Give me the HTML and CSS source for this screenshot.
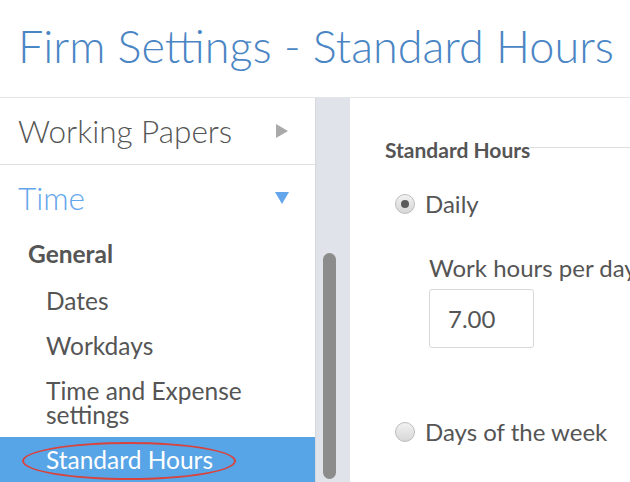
FILE: index.html
```html
<!DOCTYPE html>
<html>
<head>
<meta charset="utf-8">
<link rel="stylesheet" href="styles.css">
</head>
<body>
<header class="header">
  <h1 class="title">Firm Settings - Standard Hours</h1>
</header>
<div class="main">
  <nav class="sidebar">
    <div class="section">
      <span class="section-label">Working Papers</span>
      <span class="tri tri-right"></span>
    </div>
    <div class="section section-open">
      <span class="section-label">Time</span>
      <span class="tri tri-down"></span>
    </div>
    <div class="group">General</div>
    <a class="item">Dates</a>
    <a class="item">Workdays</a>
    <a class="item">Time and Expense settings</a>
    <a class="item item-active"><span class="item-text">Standard Hours</span><span class="ring"></span></a>
  </nav>
  <div class="scrolltrack"><div class="thumb"></div></div>
  <section class="content">
    <div class="legend"><span class="legend-text">Standard Hours</span><span class="legend-line"></span></div>
    <label class="radio-row"><span class="radio radio-on"></span><span>Daily</span></label>
    <div class="field">
      <div class="field-label">Work hours per day</div>
      <div class="input">7.00</div>
    </div>
    <label class="radio-row radio-week"><span class="radio"></span><span>Days of the week</span></label>
  </section>
</div>
</body>
</html>
```

FILE: styles.css
```css
* { box-sizing: border-box; }
html, body { margin: 0; padding: 0; }
body {
  width: 630px;
  height: 482px;
  overflow: hidden;
  background: #fff;
  font-family: Lato, "Open Sans", sans-serif;
  color: #555;
}
.header {
  height: 98px;
  border-bottom: 1px solid #e3e5e8;
  padding: 18px 0 0 18px;
}
.title {
  margin: 0;
  font-weight: 300;
  font-size: 45px;
  line-height: 56px;
  color: #4a85c4;
  white-space: nowrap;
}
.main {
  display: flex;
  height: 384px;
}
.sidebar {
  width: 316px;
  flex: none;
  border-right: 1px solid #d5d8dc;
  display: flex;
  flex-direction: column;
}
.section {
  height: 67px;
  flex: none;
  display: flex;
  align-items: center;
  justify-content: space-between;
  padding: 0 27px 0 18px;
  border-bottom: 1px solid #dfe1e4;
}
.section-label {
  font-weight: 300;
  font-size: 31.5px;
  color: #555;
}
.section-open { border-bottom: none; height: 70px; padding-bottom: 5px; }
.section-open .section-label { color: #64a6ec; }
.tri { width: 0; height: 0; }
.tri-right {
  border-top: 7px solid transparent;
  border-bottom: 7px solid transparent;
  border-left: 12px solid #a9a9a9;
}
.tri-down {
  border-left: 7px solid transparent;
  border-right: 7px solid transparent;
  border-top: 12px solid #64a6ec;
  margin-right: -1px;
}
.group {
  padding-left: 28px;
  font-weight: 700;
  font-size: 24.5px;
  line-height: 28px;
  color: #555;
  margin-top: 5px;
  margin-bottom: 21px;
}
.item {
  display: block;
  flex: none;
  padding-left: 46px;
  padding-right: 60px;
  font-size: 24.5px;
  line-height: 24px;
  color: #555;
  margin-bottom: 21px;
}
.item-active {
  position: relative;
  background: #57a4e7;
  color: #fff;
  margin: -11px 0 0 0;
  height: 45px;
  padding-top: 11px;
}
.ring {
  position: absolute;
  left: 22px;
  top: 5px;
  width: 214px;
  height: 38px;
  border: 2.5px solid #d8443d;
  border-radius: 50%;
}
.scrolltrack {
  width: 34px;
  flex: none;
  background: #e0e3e9;
  position: relative;
}
.thumb {
  position: absolute;
  left: 7px;
  top: 155px;
  width: 13px;
  height: 226px;
  border-radius: 7px;
  background: #8c8c8c;
}
.content {
  flex: 1;
  padding: 38px 0 0 35px;
  overflow: hidden;
}
.legend {
  display: flex;
  align-items: center;
  font-weight: 700;
  font-size: 21px;
  color: #555;
  height: 26px;
}
.legend-line {
  flex: 1;
  border-top: 1px solid #ddd;
  margin-top: -4px;
}
.radio-row {
  display: flex;
  align-items: center;
  gap: 10px;
  font-size: 24px;
  line-height: 29px;
  color: #555;
  margin-top: 27px;
  padding-left: 10px;
  white-space: nowrap;
}
.radio {
  width: 20px;
  height: 20px;
  border-radius: 50%;
  border: 1px solid #bdbdbd;
  background: linear-gradient(#f2f2f2, #d7d7d7);
  display: flex;
  align-items: center;
  justify-content: center;
}
.radio-on::after {
  content: "";
  width: 8px;
  height: 8px;
  border-radius: 50%;
  background: #5b5b5b;
}
.field { padding-left: 44px; margin-top: 35px; }
.field-label {
  font-size: 24px;
  line-height: 29px;
  white-space: nowrap;
  color: #555;
}
.input {
  margin-top: 7px;
  width: 105px;
  height: 59px;
  border: 1px solid #d8d8d8;
  border-radius: 3px;
  font-size: 24px;
  display: flex;
  align-items: center;
  padding: 0 0 0 18px;
  color: #555;
}
.radio-week { margin-top: 69px; }
```
